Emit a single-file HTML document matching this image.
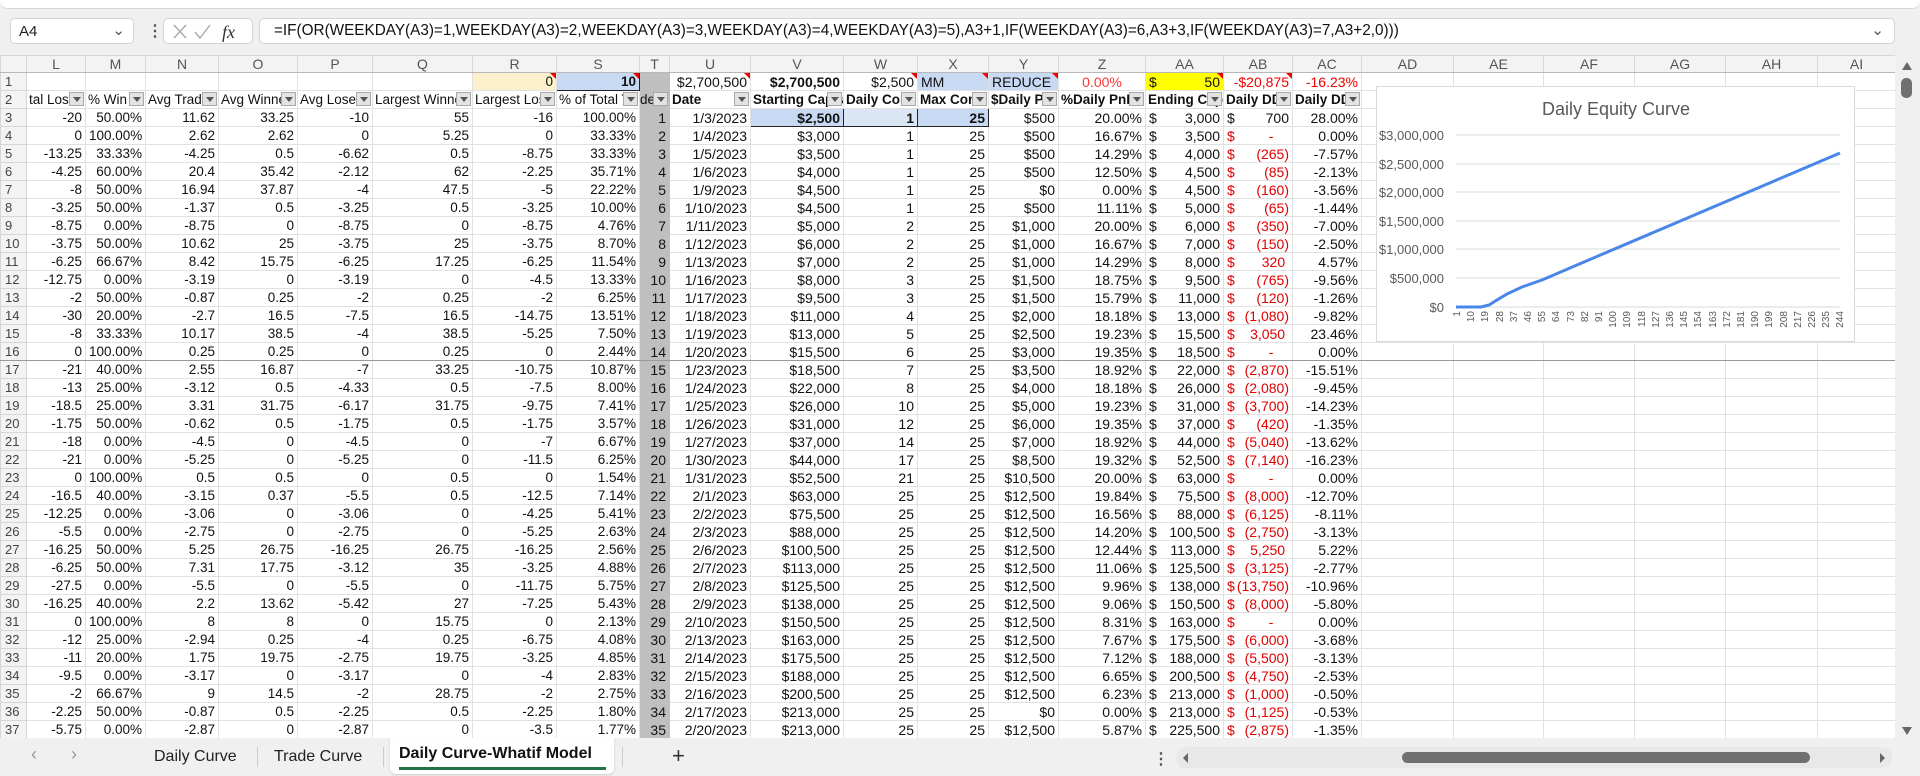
<!DOCTYPE html>
<html><head><meta charset="utf-8"><style>
*{margin:0;padding:0;box-sizing:border-box}
body{width:1920px;height:776px;overflow:hidden;background:#f0f0f0;font-family:"Liberation Sans",Arial,sans-serif;position:relative}
#rib{position:absolute;left:0;top:0;width:1920px;height:9px;background:#fff;border-bottom:1px solid #d6d6d6;border-radius:0 0 8px 8px}
.box{position:absolute;top:18px;height:26px;background:#fff;border:1px solid #d4d4d4;border-radius:5px}
#nb{left:10px;width:124px;font-size:15px;padding:4px 0 0 8px;color:#222}
#fx{left:163px;width:90px}
#fb{left:259px;width:1636px;font-size:15.3px;padding:3px 0 0 14px;color:#111;white-space:nowrap;overflow:hidden}
#grid{position:absolute;left:0;top:55px;width:1895px;height:683px;overflow:hidden;background:#fff}
table{border-collapse:collapse;table-layout:fixed;width:1895px}
td,th{height:18px;border:1px solid #e1e1e1;white-space:nowrap;overflow:hidden;font-weight:normal}
td{text-align:right;padding:0 3px;font-size:14px;color:#111;font-family:"Liberation Sans Narrow","Liberation Sans",sans-serif}
td.w{font-family:"Liberation Sans",sans-serif;font-size:13.5px}
th{background:#f3f3f3;color:#444;font-size:13px;text-align:left;padding-left:4px;border-color:#d6d6d6}
tr.h th{height:17px;text-align:center;font-size:14px;color:#555;border-bottom:1px solid #b8b8b8;padding:0}
tr.h th:first-child{background:#f3f3f3}
td.t{background:#bfbfbf;border-color:#bfbfbf}
td.d{text-align:left}
td.d i{float:right;font-style:normal}
td.e{color:#e00000;text-align:left}
td.e i{float:right;font-style:normal}
tr.b td,tr.b th{border-bottom:1px solid #9a9a9a}
tr.hd td{text-align:left;font-size:13.5px;padding:0 1px 0 2px;position:relative}
tr.hd td.bb{font-weight:bold}
u{position:absolute;right:1px;top:1px;width:15px;height:14px;background:#e3e3e3;border:1px solid #a8a8a8;text-decoration:none}
u:after{content:"";position:absolute;left:3px;top:4px;border-left:4px solid transparent;border-right:4px solid transparent;border-top:5px solid #555}
.cm{position:relative}
.cm:after{content:"";position:absolute;right:0;top:0;border-left:6px solid transparent;border-top:6px solid #e00}
#chart{position:absolute;left:1376px;top:86px;width:479px;height:256px;background:#fff;border:1px solid #d9d9d9}
#tabs{position:absolute;left:0;top:738px;width:1920px;height:38px;background:#f0f0f0;font-size:16px;color:#222}
</style></head><body>
<div id="rib"></div>
<div class="box" id="nb">A4<span style="position:absolute;right:8px;top:2px;color:#555">&#8964;</span></div>
<div style="position:absolute;left:147px;top:21px;font-size:16px;color:#555;font-weight:bold">&#8942;</div>
<div class="box" id="fx"><svg width="90" height="26"><path d="M10 6 L22 19 M22 6 L10 19" stroke="#aaa" stroke-width="1.4"/><path d="M31 13 L36 19 L46 6" stroke="#aaa" stroke-width="1.4" fill="none"/><text x="58" y="19" font-family="Liberation Serif" font-style="italic" font-size="18" fill="#333">fx</text></svg></div>
<div class="box" id="fb">=IF(OR(WEEKDAY(A3)=1,WEEKDAY(A3)=2,WEEKDAY(A3)=3,WEEKDAY(A3)=4,WEEKDAY(A3)=5),A3+1,IF(WEEKDAY(A3)=6,A3+3,IF(WEEKDAY(A3)=7,A3+2,0)))<span style="position:absolute;right:10px;top:2px;color:#555">&#8964;</span></div>
<div id="grid"><table>
<colgroup><col style="width:26px"><col style="width:59px"><col style="width:60px"><col style="width:73px"><col style="width:79px"><col style="width:75px"><col style="width:100px"><col style="width:84px"><col style="width:83px"><col style="width:30px"><col style="width:81px"><col style="width:93px"><col style="width:74px"><col style="width:71px"><col style="width:70px"><col style="width:87px"><col style="width:78px"><col style="width:69px"><col style="width:69px"><col style="width:92px"><col style="width:90px"><col style="width:91px"><col style="width:91px"><col style="width:92px"><col style="width:78px"></colgroup>
<tr class="h"><th></th><th>L</th><th>M</th><th>N</th><th>O</th><th>P</th><th>Q</th><th>R</th><th>S</th><th>T</th><th>U</th><th>V</th><th>W</th><th>X</th><th>Y</th><th>Z</th><th>AA</th><th>AB</th><th>AC</th><th>AD</th><th>AE</th><th>AF</th><th>AG</th><th>AH</th><th>AI</th></tr>
<tr><th>1</th><td></td><td></td><td></td><td></td><td></td><td></td><td class="cm w" style="background:#fdf0cc">0</td><td class="cm w" style="background:#c7d9f3;font-weight:bold;border:1px solid #222">10</td><td class="t"></td><td class="cm">$2,700,500</td><td style="font-weight:bold">$2,700,500</td><td class="cm">$2,500</td><td class="cm" style="background:#c7d9f3;text-align:left">MM</td><td class="cm" style="background:#c7d9f3;text-align:left">REDUCE</td><td style="color:#f33;text-align:center">0.00%</td><td class="d cm" style="background:#ffff00">$<i>50</i></td><td class="cm" style="color:#e00">-$20,875</td><td style="color:#e00">-16.23%</td><td></td><td></td><td></td><td></td><td></td><td></td></tr>
<tr class="hd"><th>2</th><td>tal Loss<u></u></td><td>% Win<u></u></td><td>Avg Trade<u></u></td><td>Avg Winner<u></u></td><td>Avg Loser<u></u></td><td>Largest Winner<u></u></td><td>Largest Loss<u></u></td><td>% of Total T<u></u></td><td class="t" style="padding:0">de<u></u></td><td class="bb">Date<u></u></td><td class="bb">Starting Capital<u></u></td><td class="bb">Daily Cont<u></u></td><td class="bb">Max Cont<u></u></td><td class="bb">$Daily Pnl<u></u></td><td class="bb">%Daily PnL<u></u></td><td class="bb">Ending Cap<u></u></td><td class="bb">Daily DD<u></u></td><td class="bb">Daily DD<u></u></td><td></td><td></td><td></td><td></td><td></td><td></td></tr>
<tr><th>3</th><td class="w">-20</td><td class="w">50.00%</td><td class="w">11.62</td><td class="w">33.25</td><td class="w">-10</td><td class="w">55</td><td class="w">-16</td><td class="w">100.00%</td><td class="t">1</td><td>1/3/2023</td><td style="background:#c7d9f3;font-weight:bold;border:1px solid #222">$2,500</td><td style="background:#dbe6f4;font-weight:bold;border:1px solid #222">1</td><td style="background:#c7d9f3;font-weight:bold;border:1px solid #222">25</td><td>$500</td><td>20.00%</td><td class="d">$<i>3,000</i></td><td class="d">$<i>700</i></td><td>28.00%</td><td></td><td></td><td></td><td></td><td></td><td></td></tr>
<tr><th>4</th><td class="w">0</td><td class="w">100.00%</td><td class="w">2.62</td><td class="w">2.62</td><td class="w">0</td><td class="w">5.25</td><td class="w">0</td><td class="w">33.33%</td><td class="t">2</td><td>1/4/2023</td><td>$3,000</td><td>1</td><td>25</td><td>$500</td><td>16.67%</td><td class="d">$<i>3,500</i></td><td class="e">$<i>-&nbsp;&nbsp;&nbsp;&nbsp;</i></td><td>0.00%</td><td></td><td></td><td></td><td></td><td></td><td></td></tr>
<tr><th>5</th><td class="w">-13.25</td><td class="w">33.33%</td><td class="w">-4.25</td><td class="w">0.5</td><td class="w">-6.62</td><td class="w">0.5</td><td class="w">-8.75</td><td class="w">33.33%</td><td class="t">3</td><td>1/5/2023</td><td>$3,500</td><td>1</td><td>25</td><td>$500</td><td>14.29%</td><td class="d">$<i>4,000</i></td><td class="e">$<i>(265)</i></td><td>-7.57%</td><td></td><td></td><td></td><td></td><td></td><td></td></tr>
<tr><th>6</th><td class="w">-4.25</td><td class="w">60.00%</td><td class="w">20.4</td><td class="w">35.42</td><td class="w">-2.12</td><td class="w">62</td><td class="w">-2.25</td><td class="w">35.71%</td><td class="t">4</td><td>1/6/2023</td><td>$4,000</td><td>1</td><td>25</td><td>$500</td><td>12.50%</td><td class="d">$<i>4,500</i></td><td class="e">$<i>(85)</i></td><td>-2.13%</td><td></td><td></td><td></td><td></td><td></td><td></td></tr>
<tr><th>7</th><td class="w">-8</td><td class="w">50.00%</td><td class="w">16.94</td><td class="w">37.87</td><td class="w">-4</td><td class="w">47.5</td><td class="w">-5</td><td class="w">22.22%</td><td class="t">5</td><td>1/9/2023</td><td>$4,500</td><td>1</td><td>25</td><td>$0</td><td>0.00%</td><td class="d">$<i>4,500</i></td><td class="e">$<i>(160)</i></td><td>-3.56%</td><td></td><td></td><td></td><td></td><td></td><td></td></tr>
<tr><th>8</th><td class="w">-3.25</td><td class="w">50.00%</td><td class="w">-1.37</td><td class="w">0.5</td><td class="w">-3.25</td><td class="w">0.5</td><td class="w">-3.25</td><td class="w">10.00%</td><td class="t">6</td><td>1/10/2023</td><td>$4,500</td><td>1</td><td>25</td><td>$500</td><td>11.11%</td><td class="d">$<i>5,000</i></td><td class="e">$<i>(65)</i></td><td>-1.44%</td><td></td><td></td><td></td><td></td><td></td><td></td></tr>
<tr><th>9</th><td class="w">-8.75</td><td class="w">0.00%</td><td class="w">-8.75</td><td class="w">0</td><td class="w">-8.75</td><td class="w">0</td><td class="w">-8.75</td><td class="w">4.76%</td><td class="t">7</td><td>1/11/2023</td><td>$5,000</td><td>2</td><td>25</td><td>$1,000</td><td>20.00%</td><td class="d">$<i>6,000</i></td><td class="e">$<i>(350)</i></td><td>-7.00%</td><td></td><td></td><td></td><td></td><td></td><td></td></tr>
<tr><th>10</th><td class="w">-3.75</td><td class="w">50.00%</td><td class="w">10.62</td><td class="w">25</td><td class="w">-3.75</td><td class="w">25</td><td class="w">-3.75</td><td class="w">8.70%</td><td class="t">8</td><td>1/12/2023</td><td>$6,000</td><td>2</td><td>25</td><td>$1,000</td><td>16.67%</td><td class="d">$<i>7,000</i></td><td class="e">$<i>(150)</i></td><td>-2.50%</td><td></td><td></td><td></td><td></td><td></td><td></td></tr>
<tr><th>11</th><td class="w">-6.25</td><td class="w">66.67%</td><td class="w">8.42</td><td class="w">15.75</td><td class="w">-6.25</td><td class="w">17.25</td><td class="w">-6.25</td><td class="w">11.54%</td><td class="t">9</td><td>1/13/2023</td><td>$7,000</td><td>2</td><td>25</td><td>$1,000</td><td>14.29%</td><td class="d">$<i>8,000</i></td><td class="e">$<i>320&nbsp;</i></td><td>4.57%</td><td></td><td></td><td></td><td></td><td></td><td></td></tr>
<tr><th>12</th><td class="w">-12.75</td><td class="w">0.00%</td><td class="w">-3.19</td><td class="w">0</td><td class="w">-3.19</td><td class="w">0</td><td class="w">-4.5</td><td class="w">13.33%</td><td class="t">10</td><td>1/16/2023</td><td>$8,000</td><td>3</td><td>25</td><td>$1,500</td><td>18.75%</td><td class="d">$<i>9,500</i></td><td class="e">$<i>(765)</i></td><td>-9.56%</td><td></td><td></td><td></td><td></td><td></td><td></td></tr>
<tr><th>13</th><td class="w">-2</td><td class="w">50.00%</td><td class="w">-0.87</td><td class="w">0.25</td><td class="w">-2</td><td class="w">0.25</td><td class="w">-2</td><td class="w">6.25%</td><td class="t">11</td><td>1/17/2023</td><td>$9,500</td><td>3</td><td>25</td><td>$1,500</td><td>15.79%</td><td class="d">$<i>11,000</i></td><td class="e">$<i>(120)</i></td><td>-1.26%</td><td></td><td></td><td></td><td></td><td></td><td></td></tr>
<tr><th>14</th><td class="w">-30</td><td class="w">20.00%</td><td class="w">-2.7</td><td class="w">16.5</td><td class="w">-7.5</td><td class="w">16.5</td><td class="w">-14.75</td><td class="w">13.51%</td><td class="t">12</td><td>1/18/2023</td><td>$11,000</td><td>4</td><td>25</td><td>$2,000</td><td>18.18%</td><td class="d">$<i>13,000</i></td><td class="e">$<i>(1,080)</i></td><td>-9.82%</td><td></td><td></td><td></td><td></td><td></td><td></td></tr>
<tr><th>15</th><td class="w">-8</td><td class="w">33.33%</td><td class="w">10.17</td><td class="w">38.5</td><td class="w">-4</td><td class="w">38.5</td><td class="w">-5.25</td><td class="w">7.50%</td><td class="t">13</td><td>1/19/2023</td><td>$13,000</td><td>5</td><td>25</td><td>$2,500</td><td>19.23%</td><td class="d">$<i>15,500</i></td><td class="e">$<i>3,050&nbsp;</i></td><td>23.46%</td><td></td><td></td><td></td><td></td><td></td><td></td></tr>
<tr class="b"><th>16</th><td class="w">0</td><td class="w">100.00%</td><td class="w">0.25</td><td class="w">0.25</td><td class="w">0</td><td class="w">0.25</td><td class="w">0</td><td class="w">2.44%</td><td class="t">14</td><td>1/20/2023</td><td>$15,500</td><td>6</td><td>25</td><td>$3,000</td><td>19.35%</td><td class="d">$<i>18,500</i></td><td class="e">$<i>-&nbsp;&nbsp;&nbsp;&nbsp;</i></td><td>0.00%</td><td></td><td></td><td></td><td></td><td></td><td></td></tr>
<tr><th>17</th><td class="w">-21</td><td class="w">40.00%</td><td class="w">2.55</td><td class="w">16.87</td><td class="w">-7</td><td class="w">33.25</td><td class="w">-10.75</td><td class="w">10.87%</td><td class="t">15</td><td>1/23/2023</td><td>$18,500</td><td>7</td><td>25</td><td>$3,500</td><td>18.92%</td><td class="d">$<i>22,000</i></td><td class="e">$<i>(2,870)</i></td><td>-15.51%</td><td></td><td></td><td></td><td></td><td></td><td></td></tr>
<tr><th>18</th><td class="w">-13</td><td class="w">25.00%</td><td class="w">-3.12</td><td class="w">0.5</td><td class="w">-4.33</td><td class="w">0.5</td><td class="w">-7.5</td><td class="w">8.00%</td><td class="t">16</td><td>1/24/2023</td><td>$22,000</td><td>8</td><td>25</td><td>$4,000</td><td>18.18%</td><td class="d">$<i>26,000</i></td><td class="e">$<i>(2,080)</i></td><td>-9.45%</td><td></td><td></td><td></td><td></td><td></td><td></td></tr>
<tr><th>19</th><td class="w">-18.5</td><td class="w">25.00%</td><td class="w">3.31</td><td class="w">31.75</td><td class="w">-6.17</td><td class="w">31.75</td><td class="w">-9.75</td><td class="w">7.41%</td><td class="t">17</td><td>1/25/2023</td><td>$26,000</td><td>10</td><td>25</td><td>$5,000</td><td>19.23%</td><td class="d">$<i>31,000</i></td><td class="e">$<i>(3,700)</i></td><td>-14.23%</td><td></td><td></td><td></td><td></td><td></td><td></td></tr>
<tr><th>20</th><td class="w">-1.75</td><td class="w">50.00%</td><td class="w">-0.62</td><td class="w">0.5</td><td class="w">-1.75</td><td class="w">0.5</td><td class="w">-1.75</td><td class="w">3.57%</td><td class="t">18</td><td>1/26/2023</td><td>$31,000</td><td>12</td><td>25</td><td>$6,000</td><td>19.35%</td><td class="d">$<i>37,000</i></td><td class="e">$<i>(420)</i></td><td>-1.35%</td><td></td><td></td><td></td><td></td><td></td><td></td></tr>
<tr><th>21</th><td class="w">-18</td><td class="w">0.00%</td><td class="w">-4.5</td><td class="w">0</td><td class="w">-4.5</td><td class="w">0</td><td class="w">-7</td><td class="w">6.67%</td><td class="t">19</td><td>1/27/2023</td><td>$37,000</td><td>14</td><td>25</td><td>$7,000</td><td>18.92%</td><td class="d">$<i>44,000</i></td><td class="e">$<i>(5,040)</i></td><td>-13.62%</td><td></td><td></td><td></td><td></td><td></td><td></td></tr>
<tr><th>22</th><td class="w">-21</td><td class="w">0.00%</td><td class="w">-5.25</td><td class="w">0</td><td class="w">-5.25</td><td class="w">0</td><td class="w">-11.5</td><td class="w">6.25%</td><td class="t">20</td><td>1/30/2023</td><td>$44,000</td><td>17</td><td>25</td><td>$8,500</td><td>19.32%</td><td class="d">$<i>52,500</i></td><td class="e">$<i>(7,140)</i></td><td>-16.23%</td><td></td><td></td><td></td><td></td><td></td><td></td></tr>
<tr><th>23</th><td class="w">0</td><td class="w">100.00%</td><td class="w">0.5</td><td class="w">0.5</td><td class="w">0</td><td class="w">0.5</td><td class="w">0</td><td class="w">1.54%</td><td class="t">21</td><td>1/31/2023</td><td>$52,500</td><td>21</td><td>25</td><td>$10,500</td><td>20.00%</td><td class="d">$<i>63,000</i></td><td class="e">$<i>-&nbsp;&nbsp;&nbsp;&nbsp;</i></td><td>0.00%</td><td></td><td></td><td></td><td></td><td></td><td></td></tr>
<tr><th>24</th><td class="w">-16.5</td><td class="w">40.00%</td><td class="w">-3.15</td><td class="w">0.37</td><td class="w">-5.5</td><td class="w">0.5</td><td class="w">-12.5</td><td class="w">7.14%</td><td class="t">22</td><td>2/1/2023</td><td>$63,000</td><td>25</td><td>25</td><td>$12,500</td><td>19.84%</td><td class="d">$<i>75,500</i></td><td class="e">$<i>(8,000)</i></td><td>-12.70%</td><td></td><td></td><td></td><td></td><td></td><td></td></tr>
<tr><th>25</th><td class="w">-12.25</td><td class="w">0.00%</td><td class="w">-3.06</td><td class="w">0</td><td class="w">-3.06</td><td class="w">0</td><td class="w">-4.25</td><td class="w">5.41%</td><td class="t">23</td><td>2/2/2023</td><td>$75,500</td><td>25</td><td>25</td><td>$12,500</td><td>16.56%</td><td class="d">$<i>88,000</i></td><td class="e">$<i>(6,125)</i></td><td>-8.11%</td><td></td><td></td><td></td><td></td><td></td><td></td></tr>
<tr><th>26</th><td class="w">-5.5</td><td class="w">0.00%</td><td class="w">-2.75</td><td class="w">0</td><td class="w">-2.75</td><td class="w">0</td><td class="w">-5.25</td><td class="w">2.63%</td><td class="t">24</td><td>2/3/2023</td><td>$88,000</td><td>25</td><td>25</td><td>$12,500</td><td>14.20%</td><td class="d">$<i>100,500</i></td><td class="e">$<i>(2,750)</i></td><td>-3.13%</td><td></td><td></td><td></td><td></td><td></td><td></td></tr>
<tr><th>27</th><td class="w">-16.25</td><td class="w">50.00%</td><td class="w">5.25</td><td class="w">26.75</td><td class="w">-16.25</td><td class="w">26.75</td><td class="w">-16.25</td><td class="w">2.56%</td><td class="t">25</td><td>2/6/2023</td><td>$100,500</td><td>25</td><td>25</td><td>$12,500</td><td>12.44%</td><td class="d">$<i>113,000</i></td><td class="e">$<i>5,250&nbsp;</i></td><td>5.22%</td><td></td><td></td><td></td><td></td><td></td><td></td></tr>
<tr><th>28</th><td class="w">-6.25</td><td class="w">50.00%</td><td class="w">7.31</td><td class="w">17.75</td><td class="w">-3.12</td><td class="w">35</td><td class="w">-3.25</td><td class="w">4.88%</td><td class="t">26</td><td>2/7/2023</td><td>$113,000</td><td>25</td><td>25</td><td>$12,500</td><td>11.06%</td><td class="d">$<i>125,500</i></td><td class="e">$<i>(3,125)</i></td><td>-2.77%</td><td></td><td></td><td></td><td></td><td></td><td></td></tr>
<tr><th>29</th><td class="w">-27.5</td><td class="w">0.00%</td><td class="w">-5.5</td><td class="w">0</td><td class="w">-5.5</td><td class="w">0</td><td class="w">-11.75</td><td class="w">5.75%</td><td class="t">27</td><td>2/8/2023</td><td>$125,500</td><td>25</td><td>25</td><td>$12,500</td><td>9.96%</td><td class="d">$<i>138,000</i></td><td class="e">$<i>(13,750)</i></td><td>-10.96%</td><td></td><td></td><td></td><td></td><td></td><td></td></tr>
<tr><th>30</th><td class="w">-16.25</td><td class="w">40.00%</td><td class="w">2.2</td><td class="w">13.62</td><td class="w">-5.42</td><td class="w">27</td><td class="w">-7.25</td><td class="w">5.43%</td><td class="t">28</td><td>2/9/2023</td><td>$138,000</td><td>25</td><td>25</td><td>$12,500</td><td>9.06%</td><td class="d">$<i>150,500</i></td><td class="e">$<i>(8,000)</i></td><td>-5.80%</td><td></td><td></td><td></td><td></td><td></td><td></td></tr>
<tr><th>31</th><td class="w">0</td><td class="w">100.00%</td><td class="w">8</td><td class="w">8</td><td class="w">0</td><td class="w">15.75</td><td class="w">0</td><td class="w">2.13%</td><td class="t">29</td><td>2/10/2023</td><td>$150,500</td><td>25</td><td>25</td><td>$12,500</td><td>8.31%</td><td class="d">$<i>163,000</i></td><td class="e">$<i>-&nbsp;&nbsp;&nbsp;&nbsp;</i></td><td>0.00%</td><td></td><td></td><td></td><td></td><td></td><td></td></tr>
<tr><th>32</th><td class="w">-12</td><td class="w">25.00%</td><td class="w">-2.94</td><td class="w">0.25</td><td class="w">-4</td><td class="w">0.25</td><td class="w">-6.75</td><td class="w">4.08%</td><td class="t">30</td><td>2/13/2023</td><td>$163,000</td><td>25</td><td>25</td><td>$12,500</td><td>7.67%</td><td class="d">$<i>175,500</i></td><td class="e">$<i>(6,000)</i></td><td>-3.68%</td><td></td><td></td><td></td><td></td><td></td><td></td></tr>
<tr><th>33</th><td class="w">-11</td><td class="w">20.00%</td><td class="w">1.75</td><td class="w">19.75</td><td class="w">-2.75</td><td class="w">19.75</td><td class="w">-3.25</td><td class="w">4.85%</td><td class="t">31</td><td>2/14/2023</td><td>$175,500</td><td>25</td><td>25</td><td>$12,500</td><td>7.12%</td><td class="d">$<i>188,000</i></td><td class="e">$<i>(5,500)</i></td><td>-3.13%</td><td></td><td></td><td></td><td></td><td></td><td></td></tr>
<tr><th>34</th><td class="w">-9.5</td><td class="w">0.00%</td><td class="w">-3.17</td><td class="w">0</td><td class="w">-3.17</td><td class="w">0</td><td class="w">-4</td><td class="w">2.83%</td><td class="t">32</td><td>2/15/2023</td><td>$188,000</td><td>25</td><td>25</td><td>$12,500</td><td>6.65%</td><td class="d">$<i>200,500</i></td><td class="e">$<i>(4,750)</i></td><td>-2.53%</td><td></td><td></td><td></td><td></td><td></td><td></td></tr>
<tr><th>35</th><td class="w">-2</td><td class="w">66.67%</td><td class="w">9</td><td class="w">14.5</td><td class="w">-2</td><td class="w">28.75</td><td class="w">-2</td><td class="w">2.75%</td><td class="t">33</td><td>2/16/2023</td><td>$200,500</td><td>25</td><td>25</td><td>$12,500</td><td>6.23%</td><td class="d">$<i>213,000</i></td><td class="e">$<i>(1,000)</i></td><td>-0.50%</td><td></td><td></td><td></td><td></td><td></td><td></td></tr>
<tr><th>36</th><td class="w">-2.25</td><td class="w">50.00%</td><td class="w">-0.87</td><td class="w">0.5</td><td class="w">-2.25</td><td class="w">0.5</td><td class="w">-2.25</td><td class="w">1.80%</td><td class="t">34</td><td>2/17/2023</td><td>$213,000</td><td>25</td><td>25</td><td>$0</td><td>0.00%</td><td class="d">$<i>213,000</i></td><td class="e">$<i>(1,125)</i></td><td>-0.53%</td><td></td><td></td><td></td><td></td><td></td><td></td></tr>
<tr><th>37</th><td class="w">-5.75</td><td class="w">0.00%</td><td class="w">-2.87</td><td class="w">0</td><td class="w">-2.87</td><td class="w">0</td><td class="w">-3.5</td><td class="w">1.77%</td><td class="t">35</td><td>2/20/2023</td><td>$213,000</td><td>25</td><td>25</td><td>$12,500</td><td>5.87%</td><td class="d">$<i>225,500</i></td><td class="e">$<i>(2,875)</i></td><td>-1.35%</td><td></td><td></td><td></td><td></td><td></td><td></td></tr>
<tr><th>38</th><td></td><td></td><td></td><td></td><td></td><td></td><td></td><td></td><td class="t"></td><td></td><td></td><td></td><td></td><td></td><td></td><td></td><td></td><td></td><td></td><td></td><td></td><td></td><td></td><td></td></tr>
</table></div>
<div id="chart"><svg width="479" height="256" font-family="Liberation Sans Narrow, Liberation Sans, sans-serif">
<text x="239" y="28" text-anchor="middle" font-size="18" fill="#595959" font-family="Liberation Sans">Daily Equity Curve</text>
<g stroke="#d9d9d9" stroke-width="1"><line x1="79" y1="48" x2="463" y2="48"/><line x1="79" y1="77" x2="463" y2="77"/><line x1="79" y1="105" x2="463" y2="105"/><line x1="79" y1="134" x2="463" y2="134"/><line x1="79" y1="162" x2="463" y2="162"/><line x1="79" y1="191" x2="463" y2="191"/><line x1="79" y1="220" x2="463" y2="220"/></g>
<g font-size="13" fill="#595959" text-anchor="end"><text x="67" y="53">$3,000,000</text><text x="67" y="82">$2,500,000</text><text x="67" y="110">$2,000,000</text><text x="67" y="139">$1,500,000</text><text x="67" y="167">$1,000,000</text><text x="67" y="196">$500,000</text><text x="67" y="225">$0</text></g>
<polyline fill="none" stroke="#4a86e8" stroke-width="3" points="79,220 104,220 112,218 120,213 130,207 145,200 165,193 200,178 463,66"/>
<g font-size="10" fill="#595959" text-anchor="end">
<text transform="translate(83,224) rotate(-90)">1</text><text transform="translate(97,224) rotate(-90)">10</text><text transform="translate(111,224) rotate(-90)">19</text><text transform="translate(126,224) rotate(-90)">28</text><text transform="translate(140,224) rotate(-90)">37</text><text transform="translate(154,224) rotate(-90)">46</text><text transform="translate(168,224) rotate(-90)">55</text><text transform="translate(182,224) rotate(-90)">64</text><text transform="translate(197,224) rotate(-90)">73</text><text transform="translate(211,224) rotate(-90)">82</text><text transform="translate(225,224) rotate(-90)">91</text><text transform="translate(239,224) rotate(-90)">100</text><text transform="translate(253,224) rotate(-90)">109</text><text transform="translate(268,224) rotate(-90)">118</text><text transform="translate(282,224) rotate(-90)">127</text><text transform="translate(296,224) rotate(-90)">136</text><text transform="translate(310,224) rotate(-90)">145</text><text transform="translate(324,224) rotate(-90)">154</text><text transform="translate(339,224) rotate(-90)">163</text><text transform="translate(353,224) rotate(-90)">172</text><text transform="translate(367,224) rotate(-90)">181</text><text transform="translate(381,224) rotate(-90)">190</text><text transform="translate(395,224) rotate(-90)">199</text><text transform="translate(410,224) rotate(-90)">208</text><text transform="translate(424,224) rotate(-90)">217</text><text transform="translate(438,224) rotate(-90)">226</text><text transform="translate(452,224) rotate(-90)">235</text><text transform="translate(466,224) rotate(-90)">244</text>
</g></svg></div>
<div style="position:absolute;left:1895px;top:55px;width:25px;height:683px;background:#f0f0f0"></div>
<div style="position:absolute;left:1902px;top:62px;border-left:5px solid transparent;border-right:5px solid transparent;border-bottom:8px solid #666"></div>
<div style="position:absolute;left:1901px;top:78px;width:11px;height:20px;border-radius:5px;background:#707070"></div>
<div style="position:absolute;left:1902px;top:727px;border-left:5px solid transparent;border-right:5px solid transparent;border-top:8px solid #666"></div>
<div id="tabs">
<span style="position:absolute;left:31px;top:6px;color:#999;font-size:18px">&#8249;</span>
<span style="position:absolute;left:71px;top:6px;color:#999;font-size:18px">&#8250;</span>
<span style="position:absolute;left:154px;top:10px">Daily Curve</span>
<div style="position:absolute;left:257px;top:9px;width:1px;height:20px;background:#ccc"></div>
<span style="position:absolute;left:274px;top:10px">Trade Curve</span>
<div style="position:absolute;left:383px;top:9px;width:1px;height:20px;background:#ccc"></div>
<div style="position:absolute;left:390px;top:0;width:224px;height:36px;background:#fff;border-radius:0 0 6px 6px;box-shadow:0 1px 2px rgba(0,0,0,.15)"></div>
<span style="position:absolute;left:399px;top:7px;font-weight:bold;color:#111">Daily Curve-Whatif Model</span>
<div style="position:absolute;left:399px;top:29px;width:207px;height:3px;background:#217346"></div>
<div style="position:absolute;left:622px;top:9px;width:1px;height:20px;background:#ccc"></div>
<span style="position:absolute;left:672px;top:5px;font-size:22px;color:#333">+</span>
<span style="position:absolute;left:1153px;top:11px;font-weight:bold;color:#555">&#8942;</span>
<div style="position:absolute;left:1176px;top:9px;width:716px;height:21px;background:#e8e8e8;border-radius:10px"></div>
<div style="position:absolute;left:1183px;top:15px;border-top:5px solid transparent;border-bottom:5px solid transparent;border-right:5px solid #666"></div>
<div style="position:absolute;left:1880px;top:15px;border-top:5px solid transparent;border-bottom:5px solid transparent;border-left:5px solid #666"></div>
<div style="position:absolute;left:1402px;top:14px;width:408px;height:11px;background:#707070;border-radius:6px"></div>
</div>
</body></html>
